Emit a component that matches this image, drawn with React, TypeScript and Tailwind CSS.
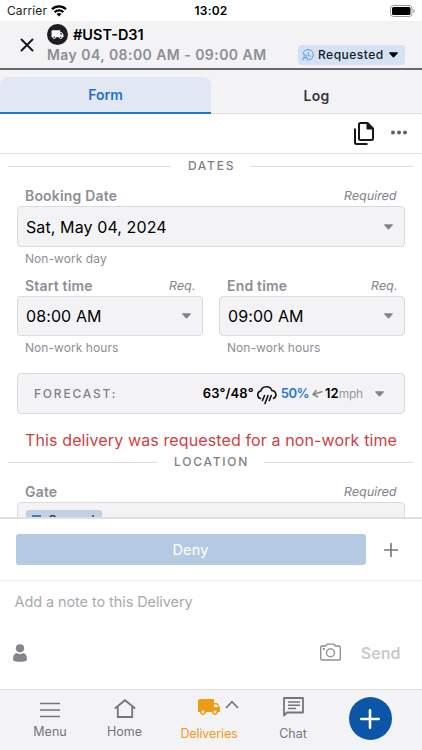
import React from "react";
import { MdLocalShipping } from "react-icons/md";

const Caret = ({ className = "" }: { className?: string }) => (
  <svg viewBox="0 0 10 6" className={`w-[9px] h-[6px] shrink-0 ${className}`} fill="currentColor">
    <path d="M0.8 0h8.4c.6 0 .9.6.5 1L5.600 5.500a.8.8 0 0 1-1.200 0L.3 1c-.4-.4-.1-1 .5-1z" />
  </svg>
);

const StatusBar = () => (
  <div className="h-[21px] shrink-0 bg-white flex items-center justify-between pl-[7px] pr-[7px] relative">
    <div className="flex items-center gap-[4px]">
      <span className="text-[12px] leading-none tracking-[0.100px] text-[#222]">Carrier</span>
      <svg viewBox="0 0 16 12" className="w-[16px] h-[12px]" fill="none" stroke="#000" strokeWidth="2.300">
        <path d="M1 4.300a10 10 0 0 1 14 0" />
        <path d="M3.700 7.200a6.200 6.200 0 0 1 8.600 0" />
        <path d="M8 11.600 5.500 9.100a3.600 3.600 0 0 1 5 0z" fill="#000" stroke="none" />
      </svg>
    </div>
    <span className="absolute left-0 w-full text-center text-[12px] leading-none font-semibold tracking-[0.200px]">13:02</span>
    <svg viewBox="0 0 25 12" className="w-[25px] h-[12px]">
      <rect x="0.500" y="0.500" width="21.500" height="11" rx="3" fill="none" stroke="#999" />
      <rect x="2" y="2" width="18.500" height="8" rx="1.500" fill="#000" />
      <path d="M23.300 4v4c.8-.3 1.300-1.100 1.300-2s-.5-1.700-1.300-2z" fill="#999" />
    </svg>
  </div>
);

const Header = () => (
  <div className="h-[49px] shrink-0 bg-[#f3f3f6] border-b-2 border-[#68686c] flex pl-[20px] pr-[17px]">
    <svg viewBox="0 0 14 14" className="w-[14px] h-[14px] mt-[17px]" stroke="#16161a" strokeWidth="1.900" strokeLinecap="round">
      <path d="M1.500 1.500l11 11M12.500 1.500l-11 11" />
    </svg>
    <div className="ml-[13px] mt-[3px] flex-1">
      <div className="flex items-center h-[21px] gap-[5px]">
        <div className="w-[21px] h-[21px] rounded-full bg-[#1d1e22] flex items-center justify-center">
          <MdLocalShipping className="w-[13px] h-[13px] text-white" />
        </div>
        <span className="text-[14.500px] font-semibold text-black">#UST-D31</span>
      </div>
      <div className="text-[14px] leading-[18px] mt-[1px] font-semibold tracking-[0.450px] text-[#8e8e93] whitespace-nowrap">
        May 04, 08:00 AM - 09:00 AM
      </div>
    </div>
    <div className="mt-[24px] w-[107px] h-[20px] rounded-[3px] bg-[#d5e2f4] flex items-center pl-[4px] pr-[7px]">
      <svg viewBox="0 0 14 14" className="w-[12px] h-[12px]" fill="none" stroke="#5b9cec" strokeWidth="1.200">
        <path d="M1.200 6.500a6 6 0 1 1 6.500 6.200" />
        <path d="M7.500 3.500v4l2.500 1.200" />
        <circle cx="3.800" cy="8.300" r="1.600" />
        <path d="M1 13.500v-1.200c0-1.500 1-2.200 2.800-2.200s2.800.7 2.800 2.200v1.200" />
      </svg>
      <span className="ml-[4px] text-[12px] font-medium tracking-[0.500px] text-[#16181d]">Requested</span>
      <Caret className="ml-auto text-black" />
    </div>
  </div>
);

const Tabs = () => (
  <div className="h-[44px] shrink-0 bg-[#f3f3f6] flex items-end text-[14px] font-semibold">
    <div className="w-[211px] h-[37px] rounded-t-[8px] bg-[#e1e8f3] border-b-2 border-[#1c74d4] flex items-center justify-center text-[#1f6fd0]">
      Form
    </div>
    <div className="w-[211px] h-[37px] border-b border-[#dcdce0] flex items-center justify-center tracking-[0.300px] text-[#38383c]">
      Log
    </div>
  </div>
);

const Toolbar = () => (
  <div className="h-[40px] shrink-0 border-b border-[#e3e3e6] flex items-center justify-end pr-[14px]">
    <svg viewBox="0 0 20 23" className="w-[20px] h-[23px]" fill="none" stroke="#16171b" strokeWidth="2" strokeLinejoin="round">
      <path d="M6.500 1h7l5.500 5.500v10a1.500 1.500 0 0 1-1.500 1.500h-11A1.500 1.500 0 0 1 5 16.500v-14A1.500 1.500 0 0 1 6.500 1z" />
      <path d="M13 1.500V7h5.500z" fill="#16171b" strokeWidth="1" />
      <path d="M1 6.500v14A1.500 1.500 0 0 0 2.500 22h11" />
    </svg>
    <svg viewBox="0 0 18 5" className="w-[18px] h-[5px] ml-[16px] -mt-[3px]" fill="#5f5f66">
      <circle cx="3" cy="2.500" r="2" />
      <circle cx="9" cy="2.500" r="2" />
      <circle cx="15" cy="2.500" r="2" />
    </svg>
  </div>
);

const SectionTitle = ({ children }: { children: React.ReactNode }) => (
  <div className="h-[24px] flex items-center gap-[17px] pl-[8px] pr-[9px]">
    <div className="flex-1 h-px bg-[#dcdcdf]" />
    <span className="text-[12px] leading-none font-medium tracking-[1.750px] -mr-[2px] text-[#7f7f85]">{children}</span>
    <div className="flex-1 h-px bg-[#dcdcdf]" />
  </div>
);

const Label = ({ text, hint }: { text: string; hint: string }) => (
  <div className="h-[20px] flex items-center justify-between px-[8px]">
    <span className="text-[14px] leading-none font-semibold tracking-[0.180px] text-[#8e8e93]">{text}</span>
    <span className="text-[12.500px] leading-none -skew-x-[10deg] text-[#85858a]">{hint}</span>
  </div>
);

const Field = ({ value, className = "h-[41px]" }: { value: string; className?: string }) => (
  <div className={`rounded-[4px] border border-[#d9d9de] bg-[#f3f3f6] flex items-center justify-between pl-[8px] pr-[11px] ${className}`}>
    <span className="text-[16px] text-black tracking-[0.100px]">{value}</span>
    <Caret className="text-[#838389]" />
  </div>
);

const Helper = ({ children }: { children: React.ReactNode }) => (
  <div className="h-[23px] flex items-center pl-[8px] text-[12px] tracking-[0.060px] text-[#8e8e93]">{children}</div>
);

const Forecast = () => (
  <div className="mt-[14px] h-[41px] rounded-[4px] border border-[#d9d9de] bg-[#f3f3f6] flex items-center pl-[16px] pr-[20px] text-[13px] whitespace-nowrap">
    <span className="text-[12px] font-medium tracking-[1.800px] text-[#7f7f85]">FORECAST:</span>
    <div className="ml-auto flex items-center">
      <span className="font-semibold tracking-[0.100px] text-black">63°/48°</span>
      <svg viewBox="0 0 22 20" className="w-[22px] h-[20px] mt-[3px] ml-[2px]" fill="none" stroke="#111216" strokeWidth="1.600" strokeLinecap="round">
        <path d="M4.500 13.500A3.900 3.900 0 0 1 4.700 6 6 6 0 0 1 16 5.500a4.200 4.200 0 0 1 1.500 8" />
        <path d="M8.500 10.500l-2 5M12 10.500l-3 8M15.300 10.500l-2 5" />
      </svg>
      <span className="ml-[3px] font-semibold tracking-[-0.500px] text-[#2577d4]">50%</span>
      <svg viewBox="0 0 11 9" className="w-[11px] h-[9px] ml-[3px]" fill="none" stroke="#85858a" strokeWidth="1.500">
        <path d="M10.500 2.500L1 5.500M4.500 1L1 5.500l5 2.500" />
      </svg>
      <span className="ml-[2px] font-semibold text-black">12</span>
      <span className="text-[12px] tracking-[-0.200px] text-[#98989d]">mph</span>
      <Caret className="ml-[12px] text-[#838389]" />
    </div>
  </div>
);

const Form = () => (
  <div className="flex-1 overflow-hidden">
    <SectionTitle>DATES</SectionTitle>
    <div className="px-[17px] pt-[8px]">
      <Label text="Booking Date" hint="Required" />
      <Field value="Sat, May 04, 2024" />
      <Helper>Non-work day</Helper>
      <div className="grid grid-cols-2 gap-[16px] mt-[6px]">
        <div>
          <Label text="Start time" hint="Req." />
          <Field value="08:00 AM" className="h-[40px]" />
          <Helper>Non-work hours</Helper>
        </div>
        <div>
          <Label text="End time" hint="Req." />
          <Field value="09:00 AM" className="h-[40px]" />
          <Helper>Non-work hours</Helper>
        </div>
      </div>
      <Forecast />
      <div className="h-[36px] pt-[16px] pl-[8px] text-[16px] leading-[20px] tracking-[0.120px] text-[#cf3f42] whitespace-nowrap">
        This delivery was requested for a non-work time
      </div>
    </div>
    <SectionTitle>LOCATION</SectionTitle>
    <div className="px-[17px] pt-[8px]">
      <Label text="Gate" hint="Required" />
      <div className="h-[41px] rounded-[4px] border border-[#d9d9de] bg-[#f3f3f6] pt-[7px] pl-[8px]">
        <div className="w-[76px] h-[20px] rounded-[3px] bg-[#c3cfe3] flex items-center pl-[6px] gap-[7px]">
          <div className="w-[9px] h-[10px] border-2 border-[#4d79bd]" />
          <span className="text-[12px] leading-none font-medium tracking-[0.300px] text-[#2a2f3a]">General</span>
        </div>
      </div>
    </div>
  </div>
);

const Actions = () => (
  <div className="h-[64px] shrink-0 border-t-2 border-[#e0e0e3] border-b border-b-[#f0f0f2] flex items-center pl-[15.500px] pr-[24px]">
    <div className="w-[350px] h-[31px] rounded-[3px] bg-[#b4cae3] text-white text-[14.500px] tracking-[0.200px] flex items-center justify-center">Deny</div>
    <svg viewBox="0 0 14 14" className="w-[14px] h-[14px] ml-auto" stroke="#75757c" strokeWidth="1.600">
      <path d="M7 0v14M0 7h14" />
    </svg>
  </div>
);

const Note = () => (
  <div className="h-[108px] shrink-0 bg-white px-[14.500px]">
    <div className="pt-[11px] h-[50px] text-[14.500px] leading-[20px] tracking-[-0.090px] text-[#a9a9ad]">Add a note to this Delivery</div>
    <div className="h-[44px] flex items-center">
      <svg viewBox="0 0 14 18" className="w-[14px] h-[18px] -ml-[2px]" fill="#85858e">
        <circle cx="7" cy="4.300" r="4.100" />
        <path d="M3.500 9C5.500 10.200 8.500 10.200 10.500 9 13 9.500 14 12 14 15.500c0 1.500-3 2.300-7 2.300s-7-.8-7-2.300C0 12 1 9.500 3.500 9z" />
      </svg>
      <svg viewBox="0 0 21 18" className="w-[21px] h-[18px] ml-auto -mt-[2px]" fill="none" stroke="#8c8c90" strokeWidth="1.300">
        <path d="M2 3h3.500L7 1.200h6.800L15.300 3H19a1.300 1.300 0 0 1 1.300 1.300v11.400A1.300 1.300 0 0 1 19 17H2A1.300 1.300 0 0 1 .7 15.700V4.300A1.300 1.300 0 0 1 2 3z" />
        <circle cx="10.500" cy="9.800" r="4" />
        <circle cx="3.800" cy="6" r="0.500" />
      </svg>
      <span className="ml-[20px] mr-[7px] text-[16px] font-semibold text-[#cacace]">Send</span>
    </div>
  </div>
);

const navLabel = "text-[12.500px] leading-[16px]";

const BottomNav = () => (
  <div className="h-[61px] shrink-0 bg-[#f3f3f6] border-t border-[#e0e0e3] flex text-[#75757c]">
    <div className="w-[87px] pl-[13px] pt-[12px] flex flex-col items-center">
      <svg viewBox="0 0 20 16" className="w-[20px] h-[16px]" stroke="currentColor" strokeWidth="1.700">
        <path d="M0 1.500h20M0 8h20M0 14.500h20" />
      </svg>
      <span className={`mt-[6px] ${navLabel}`}>Menu</span>
    </div>
    <div className="w-[75px] pt-[9px] flex flex-col items-center">
      <svg viewBox="0 0 22 19" className="w-[22px] h-[19px]" fill="none" stroke="currentColor" strokeWidth="1.800">
        <path d="M0.800 9.500L11 1.200l10.200 8.300M3.800 7.500V18h14.400V7.500" />
      </svg>
      <span className={`mt-[6px] ${navLabel}`}>Home</span>
    </div>
    <div className="w-[94px] pt-[5px] flex flex-col items-center text-[#ee9b16]">
      <div className="flex items-center h-[24px] pl-[18px] gap-[4px]">
        <MdLocalShipping className="w-[24px] h-[24px]" />
        <svg viewBox="0 0 14 9" className="w-[14px] h-[9px] -mt-[6px]" fill="none" stroke="#75757c" strokeWidth="1.800">
          <path d="M1 8l6-6.300L13 8" />
        </svg>
      </div>
      <span className={`mt-[7px] tracking-[-0.100px] ${navLabel}`}>Deliveries</span>
    </div>
    <div className="w-[74px] pt-[7px] flex flex-col items-center">
      <svg viewBox="0 0 21 20" className="w-[21px] h-[20px]" fill="none" stroke="currentColor" strokeWidth="1.800">
        <path d="M1 18.500V1h19v14.500H4z" strokeLinejoin="round" />
        <path d="M5 5h12M5 8.200h12M5 11.400h8" strokeWidth="1.500" />
      </svg>
      <span className={`mt-[9px] ${navLabel}`}>Chat</span>
    </div>
    <div className="w-[80px] pt-[7px] flex justify-center">
      <div className="w-[43px] h-[43px] rounded-full bg-[#0b56a6] flex items-center justify-center">
        <svg viewBox="0 0 20 20" className="w-[20px] h-[20px]" stroke="#fff" strokeWidth="2.600" strokeLinecap="round">
          <path d="M10 1.300v17.400M1.300 10h17.400" />
        </svg>
      </div>
    </div>
  </div>
);

const App = () => {
  return (
    <div className="w-[422px] h-[750px] overflow-hidden bg-white flex flex-col font-['Inter','Liberation_Sans',sans-serif]">
      <StatusBar />
      <Header />
      <Tabs />
      <Toolbar />
      <Form />
      <Actions />
      <Note />
      <BottomNav />
    </div>
  );
};

export default App;
